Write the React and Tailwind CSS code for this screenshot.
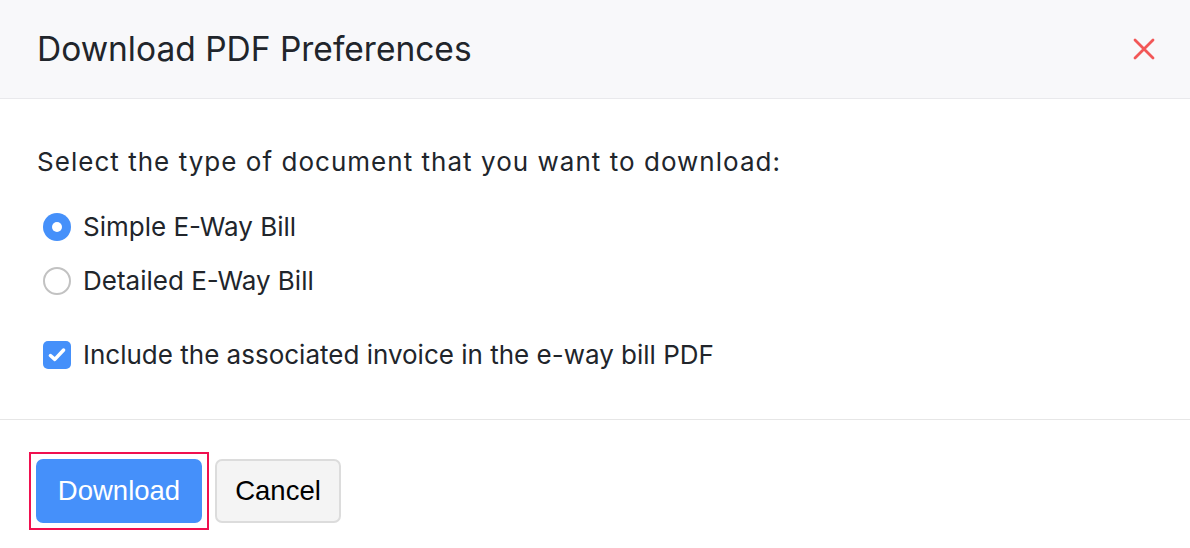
import { useState } from 'react'

export default function App() {
  const [docType, setDocType] = useState('simple')
  const [includeInvoice, setIncludeInvoice] = useState(true)

  const options = [
    { value: 'simple', label: 'Simple E-Way Bill' },
    { value: 'detailed', label: 'Detailed E-Way Bill' },
  ]

  return (
    <div className="w-[1190px] h-[548px] bg-white text-[#21252b] font-['Inter',sans-serif] overflow-hidden">
      {/* Header */}
      <div className="h-[99px] bg-[#f8f8fa] border-b border-[#e9e9ec] flex items-center justify-between pl-[37px] pr-[34px]">
        <h1 className="text-[33.5px] font-normal">Download PDF Preferences</h1>
        <button className="w-6 h-6 flex items-center justify-center text-[#f25757]">
          <svg width="22" height="22" viewBox="0 0 22 22" fill="none" stroke="currentColor" strokeWidth="2.8" strokeLinecap="round">
            <path d="M2 2 L20 20 M20 2 L2 20" />
          </svg>
        </button>
      </div>

      {/* Body */}
      <div className="h-[321px] border-b border-[#e6e6e6] pl-[37px] pt-[47px]">
        <p className="text-[26px] leading-[32px] tracking-[1.03px]">Select the type of document that you want to download:</p>
        <div className="mt-[33px] flex flex-col gap-[22px]">
          {options.map((o) => (
            <label key={o.value} className="flex items-center gap-[12px] pl-[6px] cursor-pointer" onClick={() => setDocType(o.value)}>
              {docType === o.value ? (
                <span className="w-[28px] h-[28px] rounded-full bg-[#4590fa] flex items-center justify-center">
                  <span className="w-[10px] h-[10px] rounded-full bg-white" />
                </span>
              ) : (
                <span className="w-[28px] h-[28px] rounded-full border-2 border-[#c2c2c2] bg-white" />
              )}
              <span className="text-[26px] leading-[32px]">{o.label}</span>
            </label>
          ))}
        </div>
        <label className="mt-[42px] flex items-center gap-[12px] pl-[6px] cursor-pointer" onClick={() => setIncludeInvoice(!includeInvoice)}>
          <span className={`w-[28px] h-[28px] rounded-[5px] flex items-center justify-center ${includeInvoice ? 'bg-[#4590fa]' : 'border-2 border-[#c2c2c2]'}`}>
            {includeInvoice && (
              <svg width="22" height="22" viewBox="0 0 20 20" fill="none" stroke="white" strokeWidth="3.2" strokeLinecap="round" strokeLinejoin="round">
                <path d="M4 10.5 L8 14 L16 5.5" />
              </svg>
            )}
          </span>
          <span className="text-[26px] leading-[32px]">Include the associated invoice in the e-way bill PDF</span>
        </label>
      </div>

      {/* Footer */}
      <div className="pl-[29px] pt-[32px] flex items-center gap-[6px]">
        <div className="border-2 border-[#f0104f] p-[5px]">
          <button className="w-[166px] h-[64px] rounded-[7px] bg-[#4590fa] text-white text-[27.5px] font-['Liberation_Sans',sans-serif]">Download</button>
        </div>
        <button className="w-[126px] h-[64px] rounded-[7px] bg-[#f4f4f4] border-2 border-[#dcdcdc] text-black text-[27.5px] font-['Liberation_Sans',sans-serif]">Cancel</button>
      </div>
    </div>
  )
}
